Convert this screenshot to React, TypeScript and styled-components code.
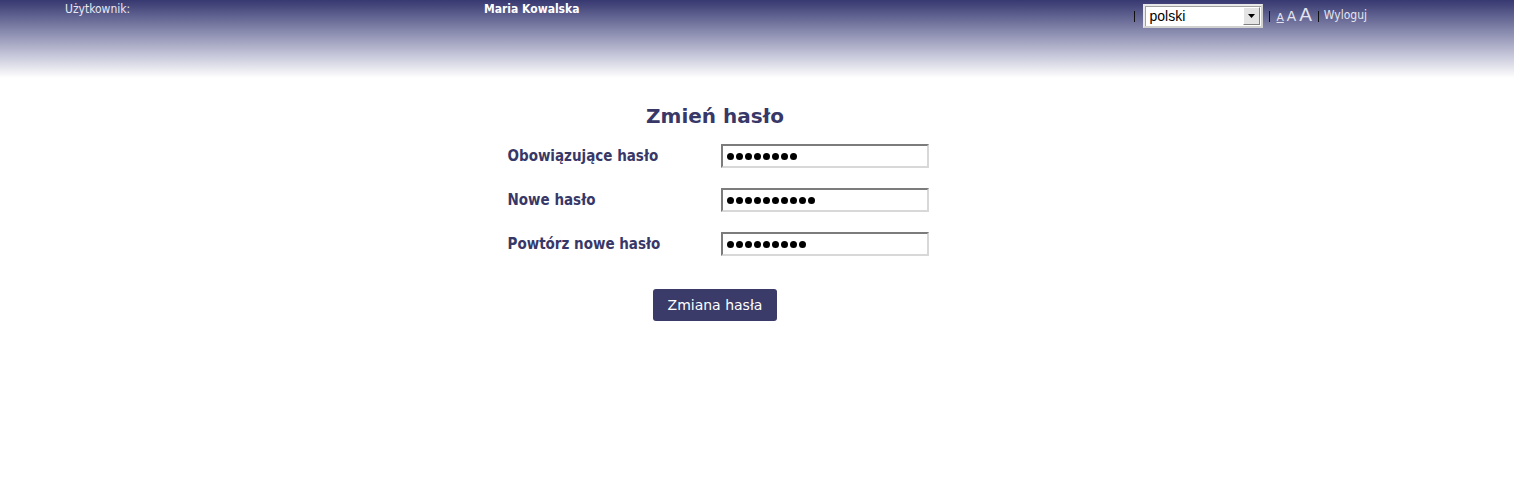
import styled, { createGlobalStyle } from "styled-components";

const Global = createGlobalStyle`
  body {
    margin: 0;
    background: #fff;
    font-family: "DejaVu Sans", Verdana, sans-serif;
  }
`;

const Header = styled.div`
  height: 78px;
  background: linear-gradient(to bottom, #363870 0%, #7d7fa6 35%, #c4c5d8 70%, #ffffff 100%);
`;

const HeaderInner = styled.div`
  width: 1302px;
  margin-left: 65px;
  display: flex;
  align-items: flex-start;
  height: 30px;
`;

const UserLabel = styled.span`
  font-family: "DejaVu Sans Condensed", "DejaVu Sans", sans-serif;
  font-size: 12px;
  color: #e8e8f2;
  width: 419px;
  padding-top: 2px;
`;

const UserName = styled.span`
  font-family: "DejaVu Sans Condensed", "DejaVu Sans", sans-serif;
  font-weight: bold;
  font-size: 12px;
  color: #ffffff;
  padding-top: 2px;
`;

const Tools = styled.div`
  margin-left: auto;
  display: flex;
  align-items: center;
  gap: 6px;
  height: 30px;
`;

const Sep = styled.span`
  width: 1px;
  height: 11px;
  background: #111;
  margin-top: 2px;
`;

const Select = styled.div`
  width: 112px;
  height: 20px;
  display: flex;
  align-items: center;
  background: #fff;
  border: 2px solid;
  border-color: #e8e8e8 #d0d0d0 #d0d0d0 #e8e8e8;
  box-shadow: inset 1px 1px 0 #a0a0a0;
  font-family: "Liberation Sans", Arial, sans-serif;
  font-size: 14px;
  color: #000;
  padding-left: 4px;
  margin-top: 2px;
  margin-left: 2px;
`;

const SelectText = styled.span`
  flex: 1;
`;

const SelectButton = styled.span`
  width: 15px;
  height: 16px;
  margin-right: 1px;
  background: #e4e4e4;
  border: 1px solid;
  border-color: #fff #808080 #808080 #fff;
  display: flex;
  align-items: center;
  justify-content: center;
`;

const FontSize = styled.span<{ $size: number; $underline?: boolean }>`
  font-family: "Liberation Sans", Arial, sans-serif;
  font-size: ${(p) => p.$size}px;
  color: #e4e4f0;
  text-decoration: ${(p) => (p.$underline ? "underline" : "none")};
  line-height: 1;
`;

const SizeGroup = styled.span`
  display: flex;
  align-items: baseline;
  gap: 3px;
  margin-top: -2px;
`;

const Logout = styled.span`
  font-family: "DejaVu Sans Condensed", "DejaVu Sans", sans-serif;
  font-size: 12px;
  color: #e4e4f0;
  margin-left: -1px;
`;

const Main = styled.div`
  width: 1302px;
  margin-left: 65px;
  display: flex;
  flex-direction: column;
  align-items: center;
  padding-top: 26px;
`;

const Title = styled.h1`
  margin: 0 0 16px 0;
  font-family: "DejaVu Sans", Verdana, sans-serif;
  font-weight: bold;
  font-size: 20px;
  color: #383868;
  padding-right: 2px;
`;

const Form = styled.div`
  display: grid;
  grid-template-columns: 213px 208px;
  row-gap: 20px;
  align-items: center;
  margin-left: 4px;
`;

const Label = styled.label`
  font-family: "DejaVu Sans Condensed", "DejaVu Sans", sans-serif;
  font-weight: bold;
  font-size: 15px;
  color: #383868;
`;

const Input = styled.div`
  box-sizing: border-box;
  height: 24px;
  width: 208px;
  border: 2px solid;
  border-color: #7c7c7c #d8d8d8 #d8d8d8 #7c7c7c;
  display: flex;
  align-items: center;
  padding-left: 4px;
  gap: 1px;
`;

const Dot = styled.span`
  width: 7px;
  height: 7px;
  border-radius: 50%;
  background: #000;
  margin-right: 1px;
`;

const Button = styled.button`
  margin-top: 33px;
  width: 124px;
  height: 32px;
  background: #3a3b69;
  color: #fff;
  border: none;
  border-radius: 3px;
  font-family: "DejaVu Sans", Verdana, sans-serif;
  font-size: 14px;
  margin-right: 2px;
`;

const fields = [
  { label: "Obowiązujące hasło", dots: 8 },
  { label: "Nowe hasło", dots: 10 },
  { label: "Powtórz nowe hasło", dots: 9 },
];

export default function App() {
  return (
    <>
      <Global />
      <Header>
        <HeaderInner>
          <UserLabel>Użytkownik:</UserLabel>
          <UserName>Maria Kowalska</UserName>
          <Tools>
            <Sep />
            <Select>
              <SelectText>polski</SelectText>
              <SelectButton>
                <svg width="7" height="4" viewBox="0 0 7 4">
                  <path d="M0 0h7L3.5 4z" fill="#000" />
                </svg>
              </SelectButton>
            </Select>
            <Sep />
            <SizeGroup>
              <FontSize $size={11} $underline>A</FontSize>
              <FontSize $size={14}>A</FontSize>
              <FontSize $size={19}>A</FontSize>
            </SizeGroup>
            <Sep />
            <Logout>Wyloguj</Logout>
          </Tools>
        </HeaderInner>
      </Header>
      <Main>
        <Title>Zmień hasło</Title>
        <Form>
          {fields.map((f) => (
            <>
              <Label key={f.label + "l"}>{f.label}</Label>
              <Input key={f.label + "i"}>
                {Array.from({ length: f.dots }).map((_, i) => (
                  <Dot key={i} />
                ))}
              </Input>
            </>
          ))}
        </Form>
        <Button>Zmiana hasła</Button>
      </Main>
    </>
  );
}
